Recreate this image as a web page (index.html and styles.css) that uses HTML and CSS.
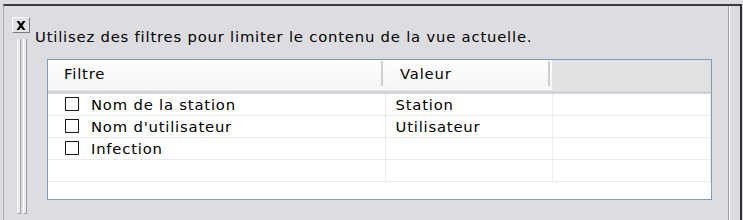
FILE: index.html
```html
<!DOCTYPE html>
<html lang="fr">
<head>
<meta charset="utf-8">
<link rel="stylesheet" href="styles.css">
</head>
<body>
<div class="frame">
  <div class="pane">
    <div class="side">
      <div class="close">
        <svg width="10" height="9" viewBox="0 0 10 9"><path d="M0.5 0h2.7l1.8 2.7L6.8 0h2.7L6.4 4.5 9.5 9H6.8L5 6.3 3.2 9H0.5l3.1-4.5z" fill="#000"/></svg>
      </div>
      <div class="grip"><span></span><span></span></div>
    </div>
    <div class="main">
      <p class="intro">Utilisez des filtres pour limiter le contenu de la vue actuelle.</p>
      <div class="list">
        <table>
          <thead>
            <tr>
              <th class="c1"><span>Filtre</span></th>
              <th class="c2"><span>Valeur</span></th>
              <th class="c3"></th>
            </tr>
          </thead>
          <tbody>
            <tr><td class="c1"><i class="box"></i>Nom de la station</td><td class="c2">Station</td><td class="c3"></td></tr>
            <tr><td class="c1"><i class="box"></i>Nom d'utilisateur</td><td class="c2">Utilisateur</td><td class="c3"></td></tr>
            <tr><td class="c1"><i class="box"></i>Infection</td><td class="c2"></td><td class="c3"></td></tr>
            <tr><td class="c1"></td><td class="c2"></td><td class="c3"></td></tr>
          </tbody>
        </table>
      </div>
    </div>
  </div>
  <div class="edge"></div>
</div>
</body>
</html>
```
FILE: styles.css
```css
html, body {
  margin: 0;
  padding: 0;
  background: #dddde1;
  width: 743px;
  height: 220px;
  overflow: hidden;
  font-family: "DejaVu Sans", Verdana, sans-serif;
  font-size: 14.8px;
  letter-spacing: 0.8px;
  color: #000;
}
.frame {
  display: flex;
  margin: 4px 0 0 3px;
  width: 739px;
  height: 216px;
  border-top: 2px solid #3a3a3a;
  border-left: 1px solid #a8a8ac;
  border-right: 2px solid #2e2e2e;
  box-sizing: border-box;
}
.pane {
  flex: 1;
  display: flex;
  border-right: 1px solid #a0a0a4;
}
.edge {
  width: 10px;
  border-left: 1px solid #ffffff;
}
.side {
  width: 28px;
  display: flex;
  flex-direction: column;
  align-items: flex-start;
  padding: 11px 0 0 8px;
  box-sizing: border-box;
}
.close {
  width: 16px;
  height: 14px;
  background: #e2e2e6;
  border: 1px solid;
  border-color: #ffffff #7c7c80 #7c7c80 #ffffff;
  display: flex;
  align-items: center;
  justify-content: center;
}
.grip {
  margin: 6px 0 6px 5px;
  flex: 1;
  display: flex;
  gap: 2px;
}
.grip span {
  width: 2px;
  border-left: 1px solid #ffffff;
  border-right: 1px solid #a0a0a4;
  border-bottom: 1px solid #a0a0a4;
  background: #ececf0;
}
.main {
  flex: 1;
  padding-left: 3px;
}
.intro {
  margin: 22px 0 0 0;
  line-height: 18px;
}
.list {
  margin: 13px 0 0 12px;
  width: 665px;
  height: 141px;
  background: #fff;
  border: 1px solid #7f9db9;
  box-sizing: border-box;
}
table {
  border-collapse: collapse;
  width: 100%;
  table-layout: fixed;
}
th {
  height: 31px;
  padding: 0;
  font-weight: normal;
  text-align: left;
  vertical-align: top;
  background: linear-gradient(#ffffff, #f4f4f6);
  border-bottom: 3px solid #d4d3d8;
  box-shadow: inset 0 -1px 0 #e6e5ea;
}
th span {
  display: block;
  padding-left: 16px;
  line-height: 25px;
  margin-top: 1px;
  border-right: 2px solid #cfcfd3;
  margin-right: 2px;
}
th.c3 {
  background: #e0e1e3;
}
td {
  height: 21px;
  padding: 0 0 0 17px;
  border-bottom: 1px solid #ebebeb;
  border-right: 1px solid #ebebeb;
  white-space: nowrap;
  line-height: 21px;
}
.c1 { width: 337px; }
.c2 { width: 167px; }
td.c2 { padding-left: 10px; }
th.c2 span { padding-left: 15px; }
.box {
  display: inline-block;
  width: 12px;
  height: 12px;
  border: 1px solid #1c1c1c;
  background: #fff;
  vertical-align: -1px;
  margin: 0 12px 0 0;
}
```
